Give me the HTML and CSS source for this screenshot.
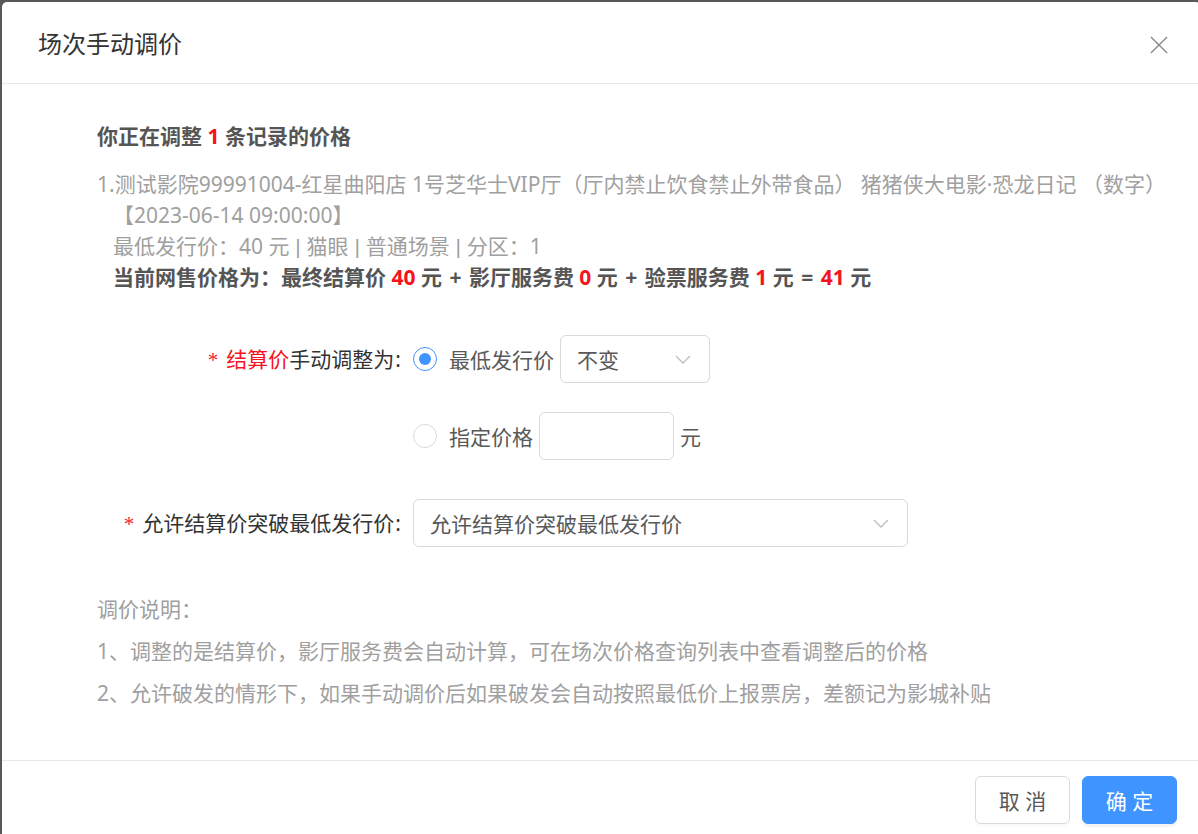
FILE: index.html
```html
<!DOCTYPE html>
<html lang="zh-CN">
<head>
<meta charset="utf-8">
<title>场次手动调价</title>
<link rel="stylesheet" href="styles.css">
</head>
<body>
<div class="backdrop">
  <div class="modal">
    <div class="modal-header">
      <div class="modal-title">场次手动调价</div>
      <button class="modal-close" aria-label="关闭">
        <svg width="20" height="20" viewBox="0 0 20 20"><path d="M1 1 L19 19 M19 1 L1 19" stroke="#8c8c8c" stroke-width="1.6" fill="none"/></svg>
      </button>
    </div>
    <div class="modal-body">
      <div class="content">
        <div class="heading">你正在调整 <span class="red">1</span> 条记录的价格</div>
        <div class="record">
          <div class="record-text"><span class="nowrap">1.测试影院99991004-红星曲阳店 1号芝华士VIP厅（厅内禁止饮食禁止外带食品） 猪猪侠大电影·恐龙日记 （数字）</span><br>【2023-06-14 09:00:00】</div>
          <div class="record-text">最低发行价：40 元<span class="sep"> | </span>猫眼<span class="sep"> | </span>普通场景<span class="sep"> | </span>分区：1</div>
          <div class="record-price">当前网售价格为：最终结算价 <span class="red">40</span> 元 <span class="op">+</span> 影厅服务费 <span class="red">0</span> 元 <span class="op">+</span> 验票服务费 <span class="red">1</span> 元 <span class="op">=</span> <span class="red">41</span> 元</div>
        </div>

        <div class="form">
          <div class="form-item form-item-radio">
            <div class="form-label"><span class="star">*</span><span class="label-red">结算价</span>手动调整为<span class="colon">:</span></div>
            <div class="form-control">
              <div class="radio-row">
                <span class="radio radio-checked"><span class="radio-dot"></span></span>
                <span class="radio-text">最低发行价</span>
                <div class="select select-small">
                  <span class="select-value">不变</span>
                  <svg class="chevron" width="16" height="9" viewBox="0 0 16 9"><path d="M1 1 L8 8 L15 1" stroke="#bfbfbf" stroke-width="1.4" fill="none"/></svg>
                </div>
              </div>
              <div class="radio-row radio-row-second">
                <span class="radio"></span>
                <span class="radio-text">指定价格</span>
                <div class="input"></div>
                <span class="unit">元</span>
              </div>
            </div>
          </div>

          <div class="form-item">
            <div class="form-label"><span class="star">*</span>允许结算价突破最低发行价<span class="colon">:</span></div>
            <div class="form-control">
              <div class="select select-wide">
                <span class="select-value">允许结算价突破最低发行价</span>
                <svg class="chevron" width="16" height="9" viewBox="0 0 16 9"><path d="M1 1 L8 8 L15 1" stroke="#bfbfbf" stroke-width="1.4" fill="none"/></svg>
              </div>
            </div>
          </div>
        </div>

        <div class="notes">
          <div>调价说明：</div>
          <div>1、调整的是结算价，影厅服务费会自动计算，可在场次价格查询列表中查看调整后的价格</div>
          <div>2、允许破发的情形下，如果手动调价后如果破发会自动按照最低价上报票房，差额记为影城补贴</div>
        </div>
      </div>
    </div>
    <div class="modal-footer">
      <button class="btn">取 消</button>
      <button class="btn btn-primary">确 定</button>
    </div>
  </div>
</div>
</body>
</html>
```
FILE: styles.css
```css
html, body {
  margin: 0;
  padding: 0;
  height: 100%;
  overflow: hidden;
}
body {
  background: #585858;
  font-family: "Noto Sans", "Noto Sans CJK SC", sans-serif;
  font-size: 21px;
  color: #595959;
}
.backdrop {
  padding: 2px 0 0 2px;
}
.modal {
  width: 1199px;
  background: #fff;
  border-radius: 5px 5px 0 0;
}
.modal-header {
  display: flex;
  align-items: center;
  justify-content: space-between;
  height: 81px;
  padding: 0 0 0 36px;
  border-bottom: 1px solid #e8e8e8;
}
.modal-title {
  font-size: 24px;
  line-height: 33px;
  color: #333;
  padding-top: 2px;
}
.modal-close {
  width: 84px;
  height: 84px;
  border: 0;
  background: none;
  padding: 0;
  display: flex;
  align-items: center;
  justify-content: center;
  margin-top: 4px;
}
.modal-close svg { width: 18px; height: 18px; }

.modal-body {
  padding: 36px 12px 46px 36px;
}
.content {
  margin-left: 59px;
}
.red { color: #f5141e; }
.nowrap { white-space: nowrap; }
.heading {
  font-weight: 700;
  line-height: 32px;
  color: #555;
  margin-bottom: 17px;
}
.record {
  padding-left: 16px;
  line-height: 31px;
}
.record-text {
  color: #a0a0a0;
}
.record-text:first-child {
  text-indent: -16px;
}
.sep {
  font-family: "Liberation Sans", sans-serif;
}
.record-price {
  font-weight: 700;
  color: #555;
}
.op {
  display: inline-block;
  padding: 0 2px;
}

.form {
  margin-top: 42px;
  display: flex;
  flex-direction: column;
  gap: 39px;
}
.form-item {
  display: flex;
  align-items: flex-start;
}
.form-label {
  width: 316px;
  flex: none;
  text-align: right;
  line-height: 48px;
  color: #333;
  white-space: nowrap;
}
.star {
  color: #f5222d;
  font-family: "Liberation Serif", serif;
  margin-right: 8px;
}
.label-red { color: #f5141e; }
.colon {
  margin: 0 12px 0 1px;
}
.form-control {
  display: flex;
  flex-direction: column;
}
.radio-row {
  display: flex;
  align-items: center;
  height: 48px;
}
.radio-row-second {
  margin-top: 29px;
}
.radio {
  width: 24px;
  height: 24px;
  box-sizing: border-box;
  border: 1.5px solid #d9d9d9;
  border-radius: 50%;
  display: flex;
  align-items: center;
  justify-content: center;
  background: #fff;
}
.radio-checked {
  border-color: #4094ff;
}
.radio-dot {
  width: 12px;
  height: 12px;
  border-radius: 50%;
  background: #4094ff;
}
.radio-text {
  padding-left: 12px;
  margin-right: 6px;
  color: #595959;
}
.select {
  box-sizing: border-box;
  height: 48px;
  border: 1.5px solid #d9d9d9;
  border-radius: 6px;
  display: flex;
  align-items: center;
  justify-content: space-between;
  padding: 0 18px 0 16px;
  color: #595959;
}
.select-small { width: 150px; }
.select-wide { width: 495px; }
.chevron { flex: none; }
.input {
  box-sizing: border-box;
  width: 135px;
  height: 48px;
  border: 1.5px solid #d9d9d9;
  border-radius: 6px;
}
.unit {
  margin-left: 6px;
  color: #595959;
}

.notes {
  margin-top: 40px;
  line-height: 42px;
  color: #a0a0a0;
}

.modal-footer {
  border-top: 1px solid #e8e8e8;
  padding: 15px 24px 30px;
  display: flex;
  justify-content: flex-end;
  gap: 12px;
}
.btn {
  box-sizing: border-box;
  width: 95px;
  height: 48px;
  border: 1.5px solid #d9d9d9;
  border-radius: 6px;
  background: #fff;
  color: #595959;
  font-family: inherit;
  font-size: 21px;
  padding: 0;
  box-shadow: 0 3px 0 rgba(0, 0, 0, 0.015);
}
.btn-primary {
  background: #4094ff;
  border-color: #4094ff;
  color: #fff;
  box-shadow: 0 3px 0 rgba(0, 0, 0, 0.045);
}
```
